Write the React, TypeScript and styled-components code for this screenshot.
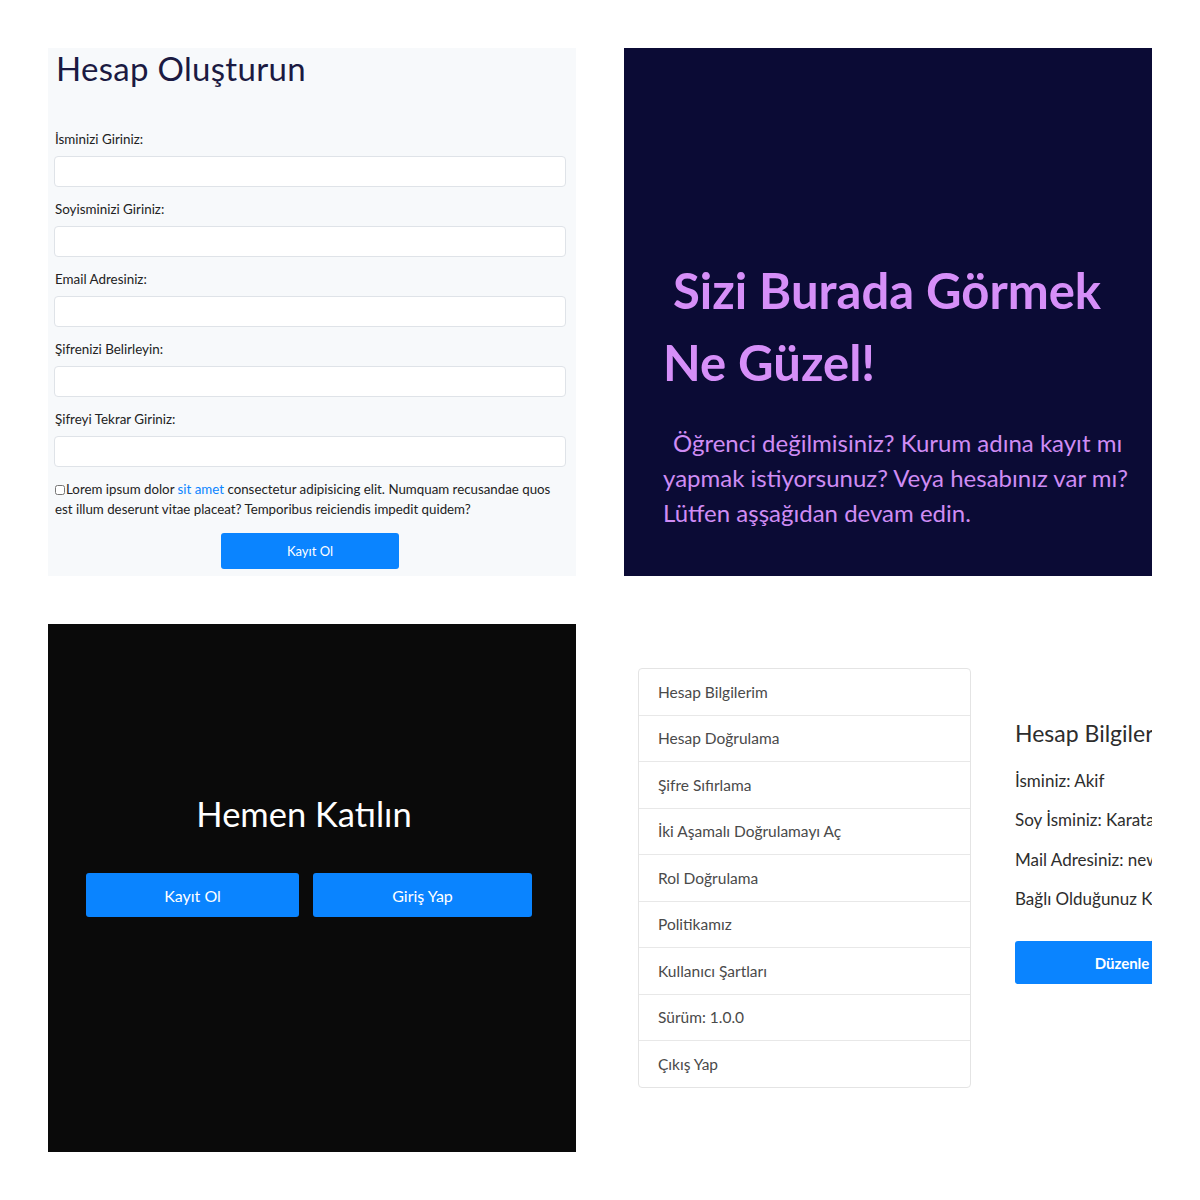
import React from "react";
import styled, { createGlobalStyle } from "styled-components";

const Global = createGlobalStyle`
  html, body { margin: 0; padding: 0; background: #ffffff; }
  body { font-family: "Lato", "Open Sans", sans-serif; }
  * { box-sizing: border-box; }
`;

const Page = styled.div`
  padding: 48px;
  display: grid;
  grid-template-columns: 528px 528px;
  grid-template-rows: 528px 528px;
  gap: 48px;
`;

const Tile = styled.section<{ $bg: string }>`
  background: ${(p) => p.$bg};
  overflow: hidden;
  position: relative;
`;

/* ---------- Tile 1: form ---------- */
const FormTile = styled(Tile)`
  padding: 0 10px 0 6px;
  display: flex;
  flex-direction: column;
`;

const FormTitle = styled.h1`
  margin: 0 0 43px 2px;
  font-size: 33px;
  line-height: 40px;
  font-weight: 400;
  color: #1b1a42;
  letter-spacing: 0.3px;
`;

const Field = styled.div`
  display: flex;
  flex-direction: column;
  margin-bottom: 14px;
`;

const Label = styled.label`
  font-size: 13.4px;
  line-height: 16px;
  color: #222;
  margin: 0 0 9px 1px;
`;

const Input = styled.input`
  height: 31px;
  width: 100%;
  border: 1px solid #dfe3e8;
  border-radius: 4px;
  background: #fff;
  outline: none;
`;

const Agree = styled.p`
  margin: -2px 0 0 1px;
  font-size: 13.3px;
  line-height: 20px;
  color: #222;
`;

const Check = styled.input`
  width: 10px;
  height: 10px;
  margin: 0 1px 0 0;
  vertical-align: -1px;
`;

const Link = styled.a`
  color: #0a84ff;
  text-decoration: none;
`;

const PrimaryButton = styled.button<{ $w: number; $h: number; $fs: number }>`
  width: ${(p) => p.$w}px;
  height: ${(p) => p.$h}px;
  border: none;
  border-radius: 3px;
  background: #0a84ff;
  color: #fff;
  font-family: inherit;
  font-size: ${(p) => p.$fs}px;
  cursor: pointer;
`;

const SubmitRow = styled.div`
  display: flex;
  justify-content: center;
  margin-top: 14px;
`;

/* ---------- Tile 2: welcome ---------- */
const WelcomeTile = styled(Tile)`
  padding: 206px 20px 0 39px;
`;

const WelcomeTitle = styled.h2`
  margin: 0;
  font-size: 49px;
  line-height: 72px;
  font-weight: 700;
  color: #d68ff8;
  text-indent: 10px;
`;

const WelcomeText = styled.p`
  margin: 27px 0 0;
  font-size: 24px;
  line-height: 35px;
  color: #cf8cf4;
  text-indent: 10px;
`;

/* ---------- Tile 3: join ---------- */
const JoinTile = styled(Tile)`
  padding: 170px 44px 0 38px;
  display: flex;
  flex-direction: column;
`;

const JoinTitle = styled.h2`
  margin: 0 10px 0 0;
  font-size: 34.5px;
  line-height: 40px;
  font-weight: 400;
  color: #fff;
  text-align: center;
`;

const JoinRow = styled.div`
  display: flex;
  gap: 14px;
  margin-top: 39px;
`;

/* ---------- Tile 4: account ---------- */
const AccountTile = styled(Tile)`
  padding: 44px 0 0 14px;
  display: flex;
  align-items: flex-start;
  gap: 44px;
`;

const Menu = styled.ul`
  flex: 0 0 333px;
  margin: 0;
  padding: 0;
  list-style: none;
  border: 1px solid #e4e4e4;
  border-radius: 4px;
  background: #fff;
`;

const MenuItem = styled.li`
  padding: 12.5px 19px;
  font-size: 15.5px;
  line-height: 20.5px;
  color: #4a4a4a;
  & + & {
    border-top: 1px solid #e8e8e8;
  }
`;

const Info = styled.div`
  margin-top: 51px;
  white-space: nowrap;
  display: flex;
  flex-direction: column;
`;

const InfoTitle = styled.h3`
  margin: 0 0 23px;
  font-size: 23px;
  line-height: 28px;
  font-weight: 400;
  color: #2d2d2d;
`;

const InfoLine = styled.p`
  margin: 0 0 17.3px;
  font-size: 17px;
  line-height: 22px;
  color: #2d2d2d;
`;

const InfoButton = styled(PrimaryButton)`
  margin-top: 14px;
  font-weight: 700;
`;

const fields = [
  "İsminizi Giriniz:",
  "Soyisminizi Giriniz:",
  "Email Adresiniz:",
  "Şifrenizi Belirleyin:",
  "Şifreyi Tekrar Giriniz:",
];

const menu = [
  "Hesap Bilgilerim",
  "Hesap Doğrulama",
  "Şifre Sıfırlama",
  "İki Aşamalı Doğrulamayı Aç",
  "Rol Doğrulama",
  "Politikamız",
  "Kullanıcı Şartları",
  "Sürüm: 1.0.0",
  "Çıkış Yap",
];

export default function App() {
  return (
    <>
      <Global />
      <Page>
        <FormTile $bg="#f7f9fb">
          <FormTitle>Hesap Oluşturun</FormTitle>
          {fields.map((f) => (
            <Field key={f}>
              <Label>{f}</Label>
              <Input type={f.startsWith("Şifre") ? "password" : "text"} />
            </Field>
          ))}
          <Agree>
            <Check type="checkbox" />
            Lorem ipsum dolor <Link href="#">sit amet</Link> consectetur adipisicing elit. Numquam recusandae quos est illum deserunt vitae placeat? Temporibus reiciendis impedit quidem?
          </Agree>
          <SubmitRow>
            <PrimaryButton $w={178} $h={36} $fs={13}>Kayıt Ol</PrimaryButton>
          </SubmitRow>
        </FormTile>

        <WelcomeTile $bg="#0b0b35">
          <WelcomeTitle>
            Sizi Burada Görmek
            <br />
            Ne Güzel!
          </WelcomeTitle>
          <WelcomeText>
            Öğrenci değilmisiniz? Kurum adına kayıt mı yapmak istiyorsunuz? Veya hesabınız var mı? Lütfen aşşağıdan devam edin.
          </WelcomeText>
        </WelcomeTile>

        <JoinTile $bg="#0a0a0a">
          <JoinTitle>Hemen Katılın</JoinTitle>
          <JoinRow>
            <PrimaryButton $w={213} $h={44} $fs={16}>Kayıt Ol</PrimaryButton>
            <PrimaryButton $w={219} $h={44} $fs={16}>Giriş Yap</PrimaryButton>
          </JoinRow>
        </JoinTile>

        <AccountTile $bg="#ffffff">
          <Menu>
            {menu.map((m) => (
              <MenuItem key={m}>{m}</MenuItem>
            ))}
          </Menu>
          <Info>
            <InfoTitle>Hesap Bilgileri</InfoTitle>
            <InfoLine>İsminiz: Akif</InfoLine>
            <InfoLine>Soy İsminiz: Karataş</InfoLine>
            <InfoLine>Mail Adresiniz: newmail@gmail.com</InfoLine>
            <InfoLine>Bağlı Olduğunuz Kurum: Yok</InfoLine>
            <InfoButton $w={214} $h={43} $fs={15}>Düzenle</InfoButton>
          </Info>
        </AccountTile>
      </Page>
    </>
  );
}
